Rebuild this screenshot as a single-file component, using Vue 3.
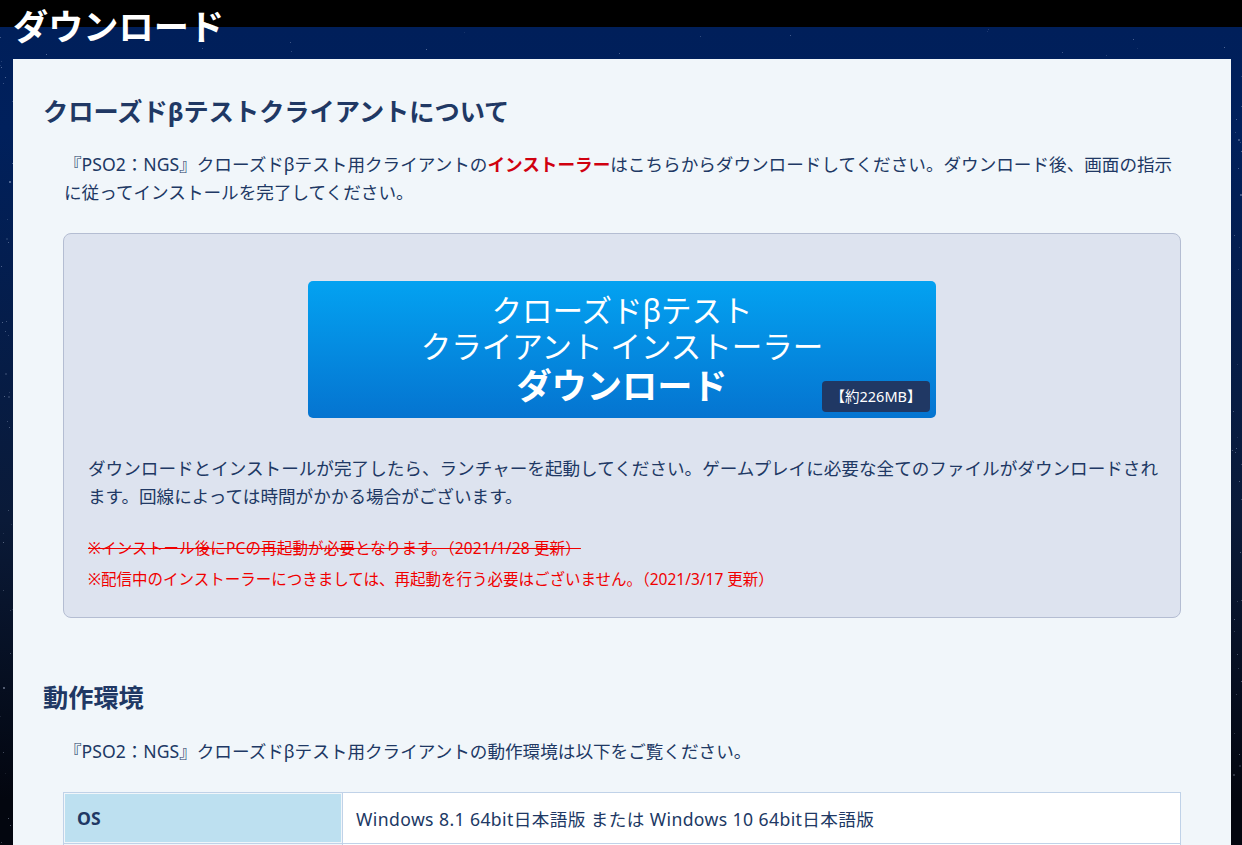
<template>
  <div class="page">
    <div class="stars" aria-hidden="true">
      <i v-for="(s, i) in stars" :key="i" :style="{ left: s.x + 'px', top: s.y + 'px', width: s.r + 'px', height: s.r + 'px', opacity: s.o }"></i>
    </div>
    <h1 class="page-title">ダウンロード</h1>
    <main class="card">
      <h2>クローズドβテストクライアントについて</h2>
      <p class="text">
        『PSO2：NGS』クローズドβテスト用クライアントの<strong class="red">インストーラー</strong>はこちらからダウンロードしてください。ダウンロード後、画面の指示に従ってインストールを完了してください。
      </p>
      <section class="panel">
        <a class="dl-btn" href="#">
          <span>クローズドβテスト</span>
          <span>クライアント インストーラー</span>
          <b>ダウンロード</b>
          <em class="size">【約226MB】</em>
        </a>
        <p class="panel-text">
          ダウンロードとインストールが完了したら、ランチャーを起動してください。ゲームプレイに必要な全てのファイルがダウンロードされます。回線によっては時間がかかる場合がございます。
        </p>
        <p class="note old"><s>※インストール後にPCの再起動が必要となります。（2021/1/28 更新）</s></p>
        <p class="note">※配信中のインストーラーにつきましては、再起動を行う必要はございません。（2021/3/17 更新）</p>
      </section>
      <h2 class="second">動作環境</h2>
      <p class="text">『PSO2：NGS』クローズドβテスト用クライアントの動作環境は以下をご覧ください。</p>
      <table class="spec">
        <tbody>
          <tr>
            <th>OS</th>
            <td>Windows 8.1 64bit日本語版 または Windows 10 64bit日本語版</td>
          </tr>
          <tr>
            <th>&nbsp;</th>
            <td>&nbsp;</td>
          </tr>
        </tbody>
      </table>
    </main>
  </div>
</template>

<script setup>
// small deterministic star field for the page background
let seed = 7
const rnd = () => {
  seed = (seed * 16807) % 2147483647
  return seed / 2147483647
}
const stars = []
for (let i = 0; i < 90; i++) {
  const x = rnd() * 1242
  // only the margins round the card show
  const side = rnd()
  stars.push({
    x: side < 0.4 ? rnd() * 13 : side < 0.8 ? 1231 + rnd() * 11 : x,
    y: side < 0.8 ? 60 + rnd() * 785 : 28 + rnd() * 30,
    r: rnd() < 0.15 ? 2 : 1,
    o: (0.15 + rnd() * 0.4).toFixed(2),
  })
}
</script>

<style>
html,
body {
  margin: 0;
  height: 845px;
  overflow: hidden;
  background: #000;
}
</style>

<style scoped>
.page {
  position: relative;
  height: 845px;
  overflow: hidden;
  padding: 0 11px 0 13px;
  background: linear-gradient(180deg, #000 27px, #001f5a 27px, #00205c 130px, #0a1a38 520px, #03060f 800px);
  font-family: "Noto Sans", "Noto Sans CJK JP", sans-serif;
  color: #203864;
}

.stars i {
  position: absolute;
  border-radius: 50%;
  background: #c8d4ee;
}

.page-title {
  position: relative;
  height: 59px;
  margin: 0;
  font-size: 35.2px;
  line-height: 52px;
  font-weight: 700;
  color: #fff;
}

.card {
  position: relative;
  padding: 28px 50px 0 30px;
  background: #f1f6fa;
}

h2 {
  margin: 0;
  font-size: 25.2px;
  line-height: 48px;
  font-weight: 700;
  color: #203864;
}

h2.second {
  margin-top: 55px;
}

.text {
  margin: 15px 0 0;
  padding-left: 21px;
  font-size: 17.6px;
  line-height: 28px;
}

.second + .text {
  margin-top: 16px;
}

.red {
  color: #d0000f;
  font-weight: 700;
}

.panel {
  margin: 27px 0 0 20px;
  padding: 47px 24px 22px;
  background: #dde3ef;
  border: 1px solid #b4bdd2;
  border-radius: 8px;
}

.dl-btn {
  position: relative;
  display: flex;
  flex-direction: column;
  align-items: center;
  width: 628px;
  height: 137px;
  margin: 0 auto;
  padding-top: 11px;
  box-sizing: border-box;
  border-radius: 5px;
  background: linear-gradient(180deg, #03a2f1, #0574d0);
  color: #fff;
  text-decoration: none;
  font-size: 30.5px;
  line-height: 36px;
  font-weight: 400;
}

.dl-btn b {
  font-size: 35.2px;
  line-height: 42px;
  font-weight: 700;
}

.size {
  position: absolute;
  right: 6px;
  bottom: 6px;
  padding: 0 8.5px;
  border-radius: 4px;
  background: #203864;
  font-size: 14.5px;
  line-height: 31px;
  font-style: normal;
  font-weight: 400;
}

.panel-text {
  margin: 36px -6px 0 0;
  font-size: 17.6px;
  line-height: 28px;
}

.note {
  margin: 0;
  color: #f00000;
  font-size: 15.5px;
  line-height: 31px;
}

.note.old {
  margin-top: 23px;
  letter-spacing: 0.15px;
}

.spec {
  width: 1118px;
  margin: 27px 0 0 20px;
  border-collapse: collapse;
  background: #fff;
  font-size: 17.6px;
}

.spec th,
.spec td {
  height: 50px;
  padding: 0 13px;
  text-align: left;
  border: 1px solid #c0d2e8;
}

.spec th {
  width: 252px;
  background: #bde0f0;
  box-shadow: inset 0 0 0 1px #f1f6fa;
  font-weight: 700;
}

.spec td {
  font-weight: 400;
  letter-spacing: 0.4px;
}
</style>
